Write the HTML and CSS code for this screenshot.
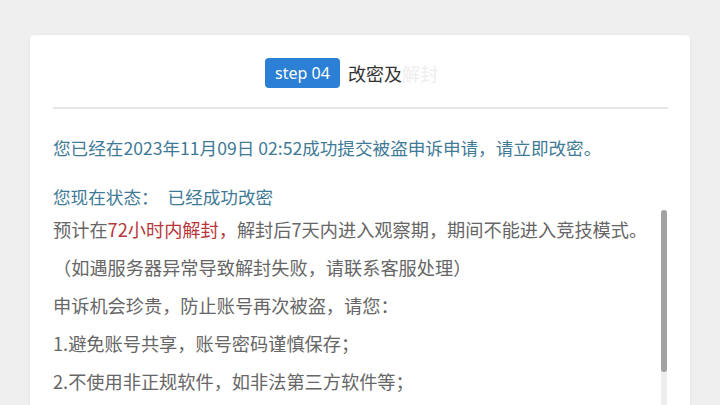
FILE: index.html
```html
<!DOCTYPE html>
<html lang="zh-CN">
<head>
    <meta charset="UTF-8">
    <meta name="viewport" content="width=device-width, initial-scale=1.0">
    <title>改密及解封</title>
    <link rel="stylesheet" href="styles.css">
</head>
<body>
    <div class="card">
        <div class="card-head">
            <span class="step-badge">step 04</span>
            <h1 class="step-title">改密及<span class="faded">解封</span></h1>
        </div>

        <p class="info">您已经在2023年11月09日 02:52成功提交被盗申诉申请，请立即改密。</p>
        <p class="info status">您现在状态：<span class="status-value">已经成功改密</span></p>

        <div class="notice">
            <div class="notice-body">
                <p>预计在<span class="warn">72小时内解封，</span>解封后7天内进入观察期，期间不能进入竞技模式。</p>
                <p>（如遇服务器异常导致解封失败，请联系客服处理）</p>
                <p>申诉机会珍贵，防止账号再次被盗，请您：</p>
                <p>1.避免账号共享，账号密码谨慎保存；</p>
                <p>2.不使用非正规软件，如非法第三方软件等；</p>
            </div>
            <!-- scrollbar drawn by hand, the screenshot browser hides native ones -->
            <div class="scroll-track">
                <div class="scroll-thumb"></div>
            </div>
        </div>
    </div>
</body>
</html>
```

FILE: styles.css
```css
/* Base */
html, body {
    height: 100%;
}

body {
    margin: 0;
    background: #efefef;
    font-family: "Noto Sans CJK SC", "Noto Sans", sans-serif;
    color: #666;
    overflow: hidden;
}

.card {
    width: 660px;
    height: 380px;
    margin: 35px auto 0;
    padding: 0 22px 0 23px;
    box-sizing: border-box;
    background: #fff;
    border-radius: 4px 4px 0 0;
    box-shadow: 0 0 3px rgba(0, 0, 0, 0.06);
    overflow: hidden;
}

/* Header */
.card-head {
    display: flex;
    align-items: center;
    gap: 8px;
    padding: 23px 0 19px 212px;
    border-bottom: 2px solid #e6e6e6;
}

.step-badge {
    display: inline-block;
    width: 75px;
    height: 30px;
    line-height: 30px;
    text-align: center;
    background: #2b7fd4;
    color: #fff;
    border-radius: 4px;
    font-family: "Noto Sans", sans-serif;
    font-size: 16px;
}

.step-title {
    margin: 0;
    font-size: 18px;
    font-weight: normal;
    color: #333;
}

.faded {
    color: #eeeeee;
}

/* Info lines */
.info {
    margin: 25px 0 0;
    font-size: 17.6px;
    line-height: 28px;
    color: #3f7a96;
}

.info.status {
    margin-top: 21px;
}

.status-value {
    margin-left: 9px;
}

/* Notice box with scrollbar */
.notice {
    display: flex;
    gap: 4px;
    margin-top: -1px;
}

.notice-body {
    flex: 1;
}

.notice-body p {
    margin: 0;
    font-size: 18.2px;
    line-height: 38px;
    color: #666;
    white-space: nowrap;
}

.warn {
    color: #b8363a;
}

.scroll-track {
    width: 6px;
    height: 200px;
    margin-right: 1px;
    background: #ededed;
    border-radius: 3px;
}

.scroll-thumb {
    height: 162px;
    background: #a2a2a2;
    border-radius: 3px;
}
```
